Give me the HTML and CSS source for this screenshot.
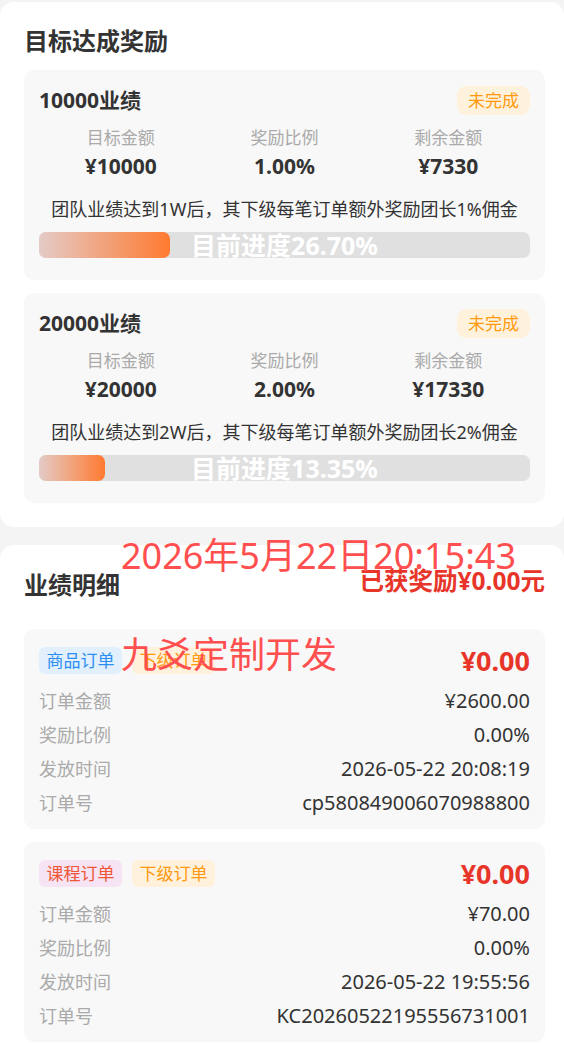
FILE: index.html
```html
<!DOCTYPE html>
<html lang="zh-CN">
<head>
<meta charset="utf-8">
<title>目标达成奖励</title>
<link rel="stylesheet" href="styles.css">
</head>
<body>
<div class="page">
  <section class="panel">
    <h2 class="panel-title">目标达成奖励</h2>

    <div class="goal-card">
      <div class="goal-head">
        <span class="goal-name">10000业绩</span>
        <span class="badge">未完成</span>
      </div>
      <div class="stats">
        <div class="stat"><div class="stat-label">目标金额</div><div class="stat-value">¥10000</div></div>
        <div class="stat"><div class="stat-label">奖励比例</div><div class="stat-value">1.00%</div></div>
        <div class="stat"><div class="stat-label">剩余金额</div><div class="stat-value">¥7330</div></div>
      </div>
      <p class="goal-desc">团队业绩达到1W后，其下级每笔订单额外奖励团长1%佣金</p>
      <div class="progress">
        <div class="progress-fill" style="width:26.7%"></div>
        <span class="progress-text">目前进度26.70%</span>
      </div>
    </div>

    <div class="goal-card">
      <div class="goal-head">
        <span class="goal-name">20000业绩</span>
        <span class="badge">未完成</span>
      </div>
      <div class="stats">
        <div class="stat"><div class="stat-label">目标金额</div><div class="stat-value">¥20000</div></div>
        <div class="stat"><div class="stat-label">奖励比例</div><div class="stat-value">2.00%</div></div>
        <div class="stat"><div class="stat-label">剩余金额</div><div class="stat-value">¥17330</div></div>
      </div>
      <p class="goal-desc">团队业绩达到2W后，其下级每笔订单额外奖励团长2%佣金</p>
      <div class="progress">
        <div class="progress-fill" style="width:13.35%"></div>
        <span class="progress-text">目前进度13.35%</span>
      </div>
    </div>
  </section>

  <section class="panel panel-detail">
    <div class="detail-head">
      <span class="detail-title">业绩明细</span>
      <span class="earned">已获奖励¥0.00元</span>
    </div>

    <div class="order-card">
      <div class="order-head">
        <div class="tags">
          <span class="tag tag-blue">商品订单</span>
          <span class="tag tag-orange">下级订单</span>
        </div>
        <span class="price">¥0.00</span>
      </div>
      <div class="row"><span class="row-label">订单金额</span><span class="row-value">¥2600.00</span></div>
      <div class="row"><span class="row-label">奖励比例</span><span class="row-value">0.00%</span></div>
      <div class="row"><span class="row-label">发放时间</span><span class="row-value">2026-05-22 20:08:19</span></div>
      <div class="row"><span class="row-label">订单号</span><span class="row-value">cp580849006070988800</span></div>
    </div>

    <div class="order-card">
      <div class="order-head">
        <div class="tags">
          <span class="tag tag-pink">课程订单</span>
          <span class="tag tag-orange">下级订单</span>
        </div>
        <span class="price">¥0.00</span>
      </div>
      <div class="row"><span class="row-label">订单金额</span><span class="row-value">¥70.00</span></div>
      <div class="row"><span class="row-label">奖励比例</span><span class="row-value">0.00%</span></div>
      <div class="row"><span class="row-label">发放时间</span><span class="row-value">2026-05-22 19:55:56</span></div>
      <div class="row"><span class="row-label">订单号</span><span class="row-value">KC20260522195556731001</span></div>
    </div>
  </section>

  <div class="watermark wm-time">2026年5月22日20:15:43</div>
  <div class="watermark wm-brand">九爻定制开发</div>
</div>
</body>
</html>
```

FILE: styles.css
```css
html, body {
  margin: 0;
  padding: 0;
}

body {
  background: #f4f4f4;
  font-family: "Noto Sans", "Noto Sans CJK SC", sans-serif;
  color: #333;
}

.page {
  position: relative;
  padding-top: 2px;
}

.panel {
  background: #fff;
  border-radius: 14px;
  padding: 24px 19px 24px 24px;
}

.panel + .panel {
  margin-top: 18px;
}

.panel-title {
  margin: 0;
  font-size: 24px;
  font-weight: 700;
  line-height: 30px;
  color: #333;
}

/* goal cards */
.goal-card {
  margin-top: 14px;
  background: #f8f8f8;
  border-radius: 10px;
  padding: 15px 15px 22px;
}

.goal-card + .goal-card {
  margin-top: 13px;
}

.goal-head {
  display: flex;
  justify-content: space-between;
  align-items: center;
  height: 30px;
}

.goal-name {
  font-size: 21px;
  font-weight: 700;
  line-height: 30px;
}

.badge {
  height: 29px;
  line-height: 29px;
  padding: 0 11px;
  border-radius: 9px;
  font-size: 17px;
  background: #fff2dd;
  color: #ff9a0e;
}

.stats {
  display: grid;
  grid-template-columns: repeat(3, 1fr);
  margin-top: 11px;
  text-align: center;
}

.stat-label {
  font-size: 17px;
  line-height: 24px;
  color: #aaa;
}

.stat-value {
  font-size: 21px;
  font-weight: 700;
  line-height: 28px;
  margin-top: 2px;
}

.goal-desc {
  margin: 16px 0 0;
  text-align: center;
  font-size: 18px;
  line-height: 26px;
}

.progress {
  position: relative;
  margin-top: 10px;
  height: 26px;
  background: #e0e0e0;
  border-radius: 7px;
}

.progress-fill {
  height: 100%;
  border-radius: 7px;
  background: linear-gradient(90deg, #e4cbc7, #ff7a30);
}

.progress-text {
  position: absolute;
  left: 0;
  right: 0;
  top: 0;
  text-align: center;
  line-height: 26px;
  color: #fff;
  font-size: 25px;
  font-weight: 700;
}

/* detail panel */
.panel-detail {
  padding-top: 23px;
}

.detail-head {
  display: flex;
  justify-content: space-between;
  align-items: center;
  height: 30px;
  margin-bottom: 31px;
}

.detail-title {
  font-size: 24px;
  font-weight: 700;
}

.earned {
  font-size: 24.5px;
  line-height: 30px;
  font-weight: 700;
  color: #e8352a;
  margin-top: -4px;
}

.order-card {
  background: #f8f8f8;
  border-radius: 10px;
  padding: 17px 15px 10px;
}

.order-card + .order-card {
  margin-top: 13px;
}

.order-head {
  display: flex;
  justify-content: space-between;
  align-items: center;
  height: 28px;
  margin-bottom: 9px;
}

.tags {
  display: flex;
  gap: 10px;
}

.tag {
  height: 27px;
  line-height: 27px;
  padding: 0 7.5px;
  border-radius: 6px;
  font-size: 17px;
}

.tag-blue {
  background: #e2f0fd;
  color: #2b8ef0;
}

.tag-orange {
  background: #fff1dc;
  color: #ff9a0e;
}

.tag-pink {
  background: #f6e3f3;
  color: #ee5636;
}

.price {
  font-size: 27px;
  font-weight: 700;
  color: #e8352a;
}

.row {
  display: flex;
  justify-content: space-between;
  align-items: center;
  height: 34px;
}

.row-label {
  font-size: 18px;
  color: #aaa;
}

.row-value {
  font-size: 20px;
  color: #333;
}

/* watermark overlays */
.watermark {
  position: absolute;
  left: 121px;
  font-size: 36px;
  line-height: 44px;
  color: #ff4f4f;
  white-space: nowrap;
  pointer-events: none;
}

.wm-time {
  top: 534px;
}

.wm-brand {
  top: 633px;
}
```
